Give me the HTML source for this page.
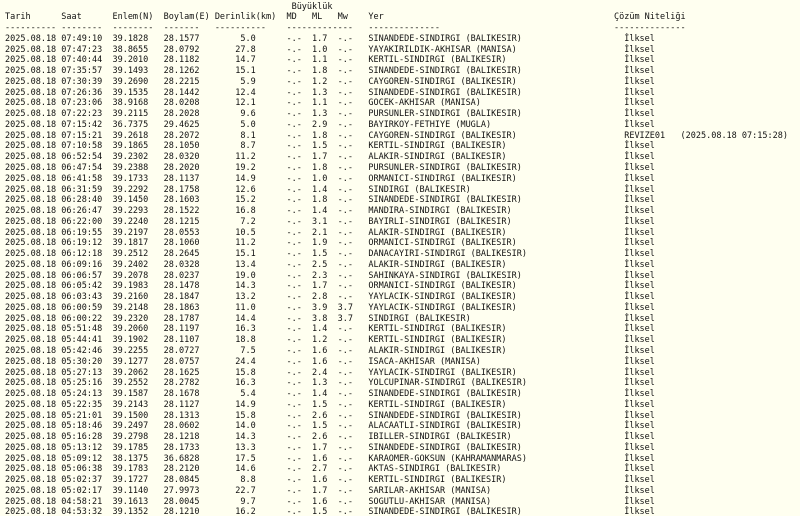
<!DOCTYPE html>
<html><head><meta charset="utf-8"><style>
html,body{margin:0;padding:0;background:#fffff0;width:800px;height:516px;overflow:hidden}
pre{margin:0;padding:1.5px 0 0 5px;font-family:"DejaVu Sans Mono","Liberation Mono",monospace;font-size:8.5px;line-height:10.77px;color:#111;white-space:pre}
</style></head><body><pre>                                                        Büyüklük
Tarih      Saat      Enlem(N)  Boylam(E) Derinlik(km)  MD   ML   Mw    Yer                                             Çözüm Niteliği
---------- --------  --------  -------   ----------    -------------   --------------                                  --------------
2025.08.18 07:49:10  39.1828   28.1577        5.0      -.-  1.7  -.-   SINANDEDE-SINDIRGI (BALIKESIR)                    İlksel
2025.08.18 07:47:23  38.8655   28.0792       27.8      -.-  1.0  -.-   YAYAKIRILDIK-AKHISAR (MANISA)                     İlksel
2025.08.18 07:40:44  39.2010   28.1182       14.7      -.-  1.1  -.-   KERTIL-SINDIRGI (BALIKESIR)                       İlksel
2025.08.18 07:35:57  39.1493   28.1262       15.1      -.-  1.8  -.-   SINANDEDE-SINDIRGI (BALIKESIR)                    İlksel
2025.08.18 07:30:39  39.2690   28.2215        5.9      -.-  1.2  -.-   CAYGOREN-SINDIRGI (BALIKESIR)                     İlksel
2025.08.18 07:26:36  39.1535   28.1442       12.4      -.-  1.3  -.-   SINANDEDE-SINDIRGI (BALIKESIR)                    İlksel
2025.08.18 07:23:06  38.9168   28.0208       12.1      -.-  1.1  -.-   GOCEK-AKHISAR (MANISA)                            İlksel
2025.08.18 07:22:23  39.2115   28.2028        9.6      -.-  1.3  -.-   PURSUNLER-SINDIRGI (BALIKESIR)                    İlksel
2025.08.18 07:15:42  36.7375   29.4625        5.0      -.-  2.9  -.-   BAYIRKOY-FETHIYE (MUGLA)                          İlksel
2025.08.18 07:15:21  39.2618   28.2072        8.1      -.-  1.8  -.-   CAYGOREN-SINDIRGI (BALIKESIR)                     REVIZE01   (2025.08.18 07:15:28)
2025.08.18 07:10:58  39.1865   28.1050        8.7      -.-  1.5  -.-   KERTIL-SINDIRGI (BALIKESIR)                       İlksel
2025.08.18 06:52:54  39.2302   28.0320       11.2      -.-  1.7  -.-   ALAKIR-SINDIRGI (BALIKESIR)                       İlksel
2025.08.18 06:47:54  39.2388   28.2020       19.2      -.-  1.8  -.-   PURSUNLER-SINDIRGI (BALIKESIR)                    İlksel
2025.08.18 06:41:58  39.1733   28.1137       14.9      -.-  1.0  -.-   ORMANICI-SINDIRGI (BALIKESIR)                     İlksel
2025.08.18 06:31:59  39.2292   28.1758       12.6      -.-  1.4  -.-   SINDIRGI (BALIKESIR)                              İlksel
2025.08.18 06:28:40  39.1450   28.1603       15.2      -.-  1.8  -.-   SINANDEDE-SINDIRGI (BALIKESIR)                    İlksel
2025.08.18 06:26:47  39.2293   28.1522       16.8      -.-  1.4  -.-   MANDIRA-SINDIRGI (BALIKESIR)                      İlksel
2025.08.18 06:22:00  39.2240   28.1215        7.2      -.-  3.1  -.-   BAYIRLI-SINDIRGI (BALIKESIR)                      İlksel
2025.08.18 06:19:55  39.2197   28.0553       10.5      -.-  2.1  -.-   ALAKIR-SINDIRGI (BALIKESIR)                       İlksel
2025.08.18 06:19:12  39.1817   28.1060       11.2      -.-  1.9  -.-   ORMANICI-SINDIRGI (BALIKESIR)                     İlksel
2025.08.18 06:12:18  39.2512   28.2645       15.1      -.-  1.5  -.-   DANACAYIRI-SINDIRGI (BALIKESIR)                   İlksel
2025.08.18 06:09:16  39.2402   28.0328       13.4      -.-  2.5  -.-   ALAKIR-SINDIRGI (BALIKESIR)                       İlksel
2025.08.18 06:06:57  39.2078   28.0237       19.0      -.-  2.3  -.-   SAHINKAYA-SINDIRGI (BALIKESIR)                    İlksel
2025.08.18 06:05:42  39.1983   28.1478       14.3      -.-  1.7  -.-   ORMANICI-SINDIRGI (BALIKESIR)                     İlksel
2025.08.18 06:03:43  39.2160   28.1847       13.2      -.-  2.8  -.-   YAYLACIK-SINDIRGI (BALIKESIR)                     İlksel
2025.08.18 06:00:59  39.2148   28.1863       11.0      -.-  3.9  3.7   YAYLACIK-SINDIRGI (BALIKESIR)                     İlksel
2025.08.18 06:00:22  39.2320   28.1787       14.4      -.-  3.8  3.7   SINDIRGI (BALIKESIR)                              İlksel
2025.08.18 05:51:48  39.2060   28.1197       16.3      -.-  1.4  -.-   KERTIL-SINDIRGI (BALIKESIR)                       İlksel
2025.08.18 05:44:41  39.1902   28.1107       18.8      -.-  1.2  -.-   KERTIL-SINDIRGI (BALIKESIR)                       İlksel
2025.08.18 05:42:46  39.2255   28.0727        7.5      -.-  1.6  -.-   ALAKIR-SINDIRGI (BALIKESIR)                       İlksel
2025.08.18 05:30:20  39.1277   28.0757       24.4      -.-  1.6  -.-   ISACA-AKHISAR (MANISA)                            İlksel
2025.08.18 05:27:13  39.2062   28.1625       15.8      -.-  2.4  -.-   YAYLACIK-SINDIRGI (BALIKESIR)                     İlksel
2025.08.18 05:25:16  39.2552   28.2782       16.3      -.-  1.3  -.-   YOLCUPINAR-SINDIRGI (BALIKESIR)                   İlksel
2025.08.18 05:24:13  39.1587   28.1678        5.4      -.-  1.4  -.-   SINANDEDE-SINDIRGI (BALIKESIR)                    İlksel
2025.08.18 05:22:35  39.2143   28.1127       14.9      -.-  1.5  -.-   KERTIL-SINDIRGI (BALIKESIR)                       İlksel
2025.08.18 05:21:01  39.1500   28.1313       15.8      -.-  2.6  -.-   SINANDEDE-SINDIRGI (BALIKESIR)                    İlksel
2025.08.18 05:18:46  39.2497   28.0602       14.0      -.-  1.5  -.-   ALACAATLI-SINDIRGI (BALIKESIR)                    İlksel
2025.08.18 05:16:28  39.2798   28.1218       14.3      -.-  2.6  -.-   IBILLER-SINDIRGI (BALIKESIR)                      İlksel
2025.08.18 05:13:12  39.1785   28.1733       13.3      -.-  1.7  -.-   SINANDEDE-SINDIRGI (BALIKESIR)                    İlksel
2025.08.18 05:09:12  38.1375   36.6828       17.5      -.-  1.6  -.-   KARAOMER-GOKSUN (KAHRAMANMARAS)                   İlksel
2025.08.18 05:06:38  39.1783   28.2120       14.6      -.-  2.7  -.-   AKTAS-SINDIRGI (BALIKESIR)                        İlksel
2025.08.18 05:02:37  39.1727   28.0845        8.8      -.-  1.6  -.-   KERTIL-SINDIRGI (BALIKESIR)                       İlksel
2025.08.18 05:02:17  39.1140   27.9973       22.7      -.-  1.7  -.-   SARILAR-AKHISAR (MANISA)                          İlksel
2025.08.18 04:58:21  39.1613   28.0045        9.7      -.-  1.6  -.-   SOGUTLU-AKHISAR (MANISA)                          İlksel
2025.08.18 04:53:32  39.1352   28.1210       16.2      -.-  1.5  -.-   SINANDEDE-SINDIRGI (BALIKESIR)                    İlksel
</pre></body></html>
